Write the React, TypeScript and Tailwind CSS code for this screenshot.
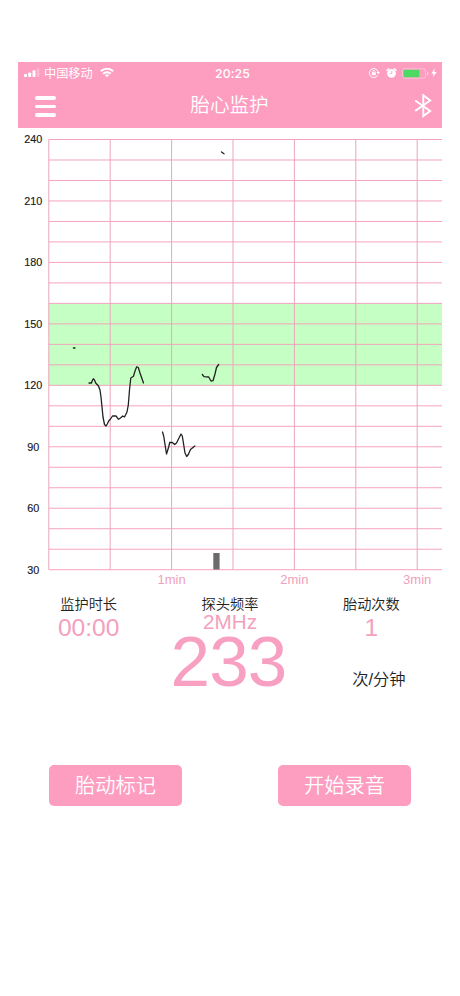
import React from 'react';

const LEFT = 48.8;
const RIGHT = 442;
const TOP = 139.5;
const ROW = 20.486;
const COL = 61.4;

const rows = Array.from({ length: 22 }, (_, i) => TOP + i * ROW);
const cols = Array.from({ length: 7 }, (_, i) => LEFT + i * COL);
const bpmLabels = [240, 210, 180, 150, 120, 90, 60, 30];
const minuteLabels = ['1min', '2min', '3min'];

const traces = [
  '73.4,348 75,348',
  '89,383 91.5,383 92.3,380.5 93.3,378.7 94.5,380 95.7,383 98.5,386 100,390 101,397 103,417 104.5,424.5 106,426 107.3,424 108.7,421 110.5,419 112.5,416 116,416 118.5,419.3 120.5,418 122.7,416 124.5,417 127,412 128.3,405 129.5,390 130.8,378 133.5,376.3 135,371 136.7,366.8 138.3,367.5 140,373 143.5,383',
  '162.5,432 163.7,436 166.5,454 168.7,447 169.7,442.5 172,442.3 174.7,444.5 176.5,443 181,434 182.3,436 185,453 186.7,456.5 188.3,454.5 190.5,449.5 194.8,446',
  '202.3,374.5 204,376.7 208.7,377 211,381 213,380.7 215,374 216.5,367.5 218.7,364.5',
  '221.5,152 224,153.8',
];

const StatusBar: React.FC = () => (
  <div className="flex h-[22px] items-center justify-between pl-[6px] pr-[5px]">
    <div className="flex w-[130px] items-center">
      <svg width="17" height="10" viewBox="0 0 17 10" fill="white">
        <rect x="0" y="6" width="3" height="3" rx="0.7" />
        <rect x="4.2" y="4.5" width="3" height="4.5" rx="0.7" />
        <rect x="8.5" y="2.2" width="3" height="6.8" rx="0.7" />
        <rect x="12.8" y="0.5" width="2.6" height="8.5" rx="0.7" opacity="0.3" />
      </svg>
      <span className="ml-[3px] pt-[2px] text-[12.2px] leading-none">中国移动</span>
      <svg className="ml-[7px]" width="14" height="11" viewBox="0 0 14 11" fill="none" stroke="white" strokeWidth="2">
        <path d="M0.8 4.3 A8.8 8.8 0 0 1 13.2 4.3" />
        <path d="M3.2 6.8 A5.4 5.4 0 0 1 10.8 6.8" />
        <path d="M7 10.3 L4.9 8.2 A3 3 0 0 1 9.1 8.2 Z" fill="white" stroke="none" />
      </svg>
    </div>
    <span className="ml-[4px] pt-[2px] font-['Inter','Liberation_Sans',sans-serif] text-[12.3px] font-medium leading-none tracking-[0.1px]">20:25</span>
    <div className="flex w-[130px] items-center justify-end">
      <svg width="12" height="12" viewBox="0 0 12 12" fill="none" stroke="white">
        <path d="M9.8 8.2 A4.5 4.5 0 1 1 10.3 5.5" strokeWidth="1" />
        <path d="M8.5 5 H12 L10.3 7.3 Z" fill="white" stroke="none" />
        <path d="M4.6 5.5 V4.6 A1.2 1.2 0 0 1 7 4.6 V5.5" strokeWidth="0.8" />
        <rect x="3.8" y="5.2" width="4" height="3" rx="0.4" fill="white" stroke="none" />
      </svg>
      <svg className="ml-[6px]" width="11" height="12" viewBox="0 0 11 12">
        <circle cx="5.5" cy="6.3" r="4.4" fill="white" />
        <path d="M1 3.2 L2.6 1.7 M10 3.2 L8.4 1.7" stroke="white" strokeWidth="1.4" strokeLinecap="round" />
        <path d="M5.8 3.6 V6.6 H3.7" stroke="#fd9dc0" strokeWidth="0.8" fill="none" />
      </svg>
      <svg className="ml-[5px]" width="27" height="11" viewBox="0 0 27 11">
        <rect x="0.5" y="0.8" width="23" height="9.4" rx="2" fill="none" stroke="white" strokeOpacity="0.45" strokeWidth="0.8" />
        <rect x="1.6" y="1.8" width="15.7" height="7.4" rx="0.8" fill="#4cd964" />
        <rect x="25" y="3.6" width="1.3" height="3.8" rx="0.6" fill="white" opacity="0.45" />
      </svg>
      <svg className="ml-[2px]" width="6" height="10" viewBox="0 0 6 10" fill="white">
        <path d="M3.9 0.5 L0.2 5.6 H2.6 L1.7 9.6 L5.7 4.1 H3.2 Z" />
      </svg>
    </div>
  </div>
);

const NavBar: React.FC = () => (
  <div className="flex h-11 items-center justify-between pl-[17px] pr-[10px]">
    <button className="flex w-[30px] flex-col gap-[5px] pt-px" aria-label="menu">
      <span className="h-[3.4px] w-[21px] rounded-full bg-white" />
      <span className="h-[3.4px] w-[21px] rounded-full bg-white" />
      <span className="h-[3.4px] w-[21px] rounded-full bg-white" />
    </button>
    <h1 className="mr-[12px] text-[19.6px] font-[350] leading-none">胎心监护</h1>
    <button className="flex w-[26px] justify-end" aria-label="bluetooth">
      <svg width="18" height="25" viewBox="0 0 18 25" fill="none" stroke="white" strokeWidth="1.9">
        <path d="M1.2 6.5 L16.2 16.9 L9.3 22 V1.2 L16.2 6.5 L1.2 16.9" />
      </svg>
    </button>
  </div>
);

const HeartRateChart: React.FC = () => (
  <svg className="block" width="424" height="462" viewBox="18 128 424 462">
    <rect x={LEFT} y={rows[8]} width={RIGHT - LEFT} height={ROW * 4} fill="#c5ffc3" />
    {rows.map((y) => (
      <line key={y} x1={LEFT} x2={RIGHT} y1={y} y2={y} stroke="#f5a3bd" strokeWidth="1" />
    ))}
    {cols.map((x) => (
      <line key={x} x1={x} x2={x} y1={TOP} y2={rows[21]} stroke="#eba6bb" strokeWidth="1" />
    ))}
    {bpmLabels.map((bpm, i) => (
      <text key={bpm} x="33.2" y={TOP + i * ROW * 3 + 3.8} fontSize="10.8" textAnchor="middle" fill="#181818" stroke="#181818" strokeWidth="0.15">
        {bpm}
      </text>
    ))}
    {minuteLabels.map((label, i) => (
      <text key={label} x={LEFT + (i + 1) * COL * 2} y="584" fontSize="13" textAnchor="middle" fill="#f0a0bc">
        {label}
      </text>
    ))}
    <rect x="213.3" y="553" width="6.3" height="16.5" fill="#6b6b6b" />
    {traces.map((points) => (
      <polyline key={points} points={points} fill="none" stroke="#222" strokeWidth="1.3" strokeLinejoin="round" strokeLinecap="round" />
    ))}
  </svg>
);

interface StatProps {
  label: string;
  value: string;
  valueClass: string;
}

const Stat: React.FC<StatProps> = ({ label, value, valueClass }) => (
  <div className="flex flex-col items-center">
    <span className="h-[22px] text-[14.2px] font-[350] leading-[28px] text-[#222]">{label}</span>
    <span className={`text-[#f4a0be] ${valueClass}`}>{value}</span>
  </div>
);

const App: React.FC = () => (
  <div className="flex min-h-[996px] w-[460px] flex-col bg-white pl-[18px] pt-[62px] font-['Liberation_Sans','Noto_Sans_CJK_SC',sans-serif]">
    <div className="w-[424px]">
      <header className="bg-[#fd9dc0] text-white">
        <StatusBar />
        <NavBar />
      </header>
      <HeartRateChart />
      <div className="grid h-[42px] grid-cols-3">
        <Stat label="监护时长" value="00:00" valueClass="text-[24.6px] leading-[31px]" />
        <Stat label="探头频率" value="2MHz" valueClass="text-[20.7px] leading-[20px]" />
        <Stat label="胎动次数" value="1" valueClass="text-[24.6px] leading-[31px]" />
      </div>
      <div className="grid h-[64px] grid-cols-3">
        <span className="col-start-2 -ml-[3px] text-center text-[71px] leading-[60px] tracking-[-0.8px] text-[#f8a0c2]">233</span>
        <span className="pl-[15px] pt-[36px] text-center text-[16.3px] font-[350] leading-[22px] text-[#222]">次/分钟</span>
      </div>
      <div className="flex justify-between px-[31px] pt-[69px]">
        <button className="h-[41px] w-[133px] rounded-[5px] bg-[#fd9dc0] pt-[2px] text-[20.3px] font-[350] leading-none text-white">胎动标记</button>
        <button className="h-[41px] w-[133px] rounded-[5px] bg-[#fd9dc0] pt-[2px] text-[20.3px] font-[350] leading-none text-white">开始录音</button>
      </div>
    </div>
  </div>
);

export default App;
